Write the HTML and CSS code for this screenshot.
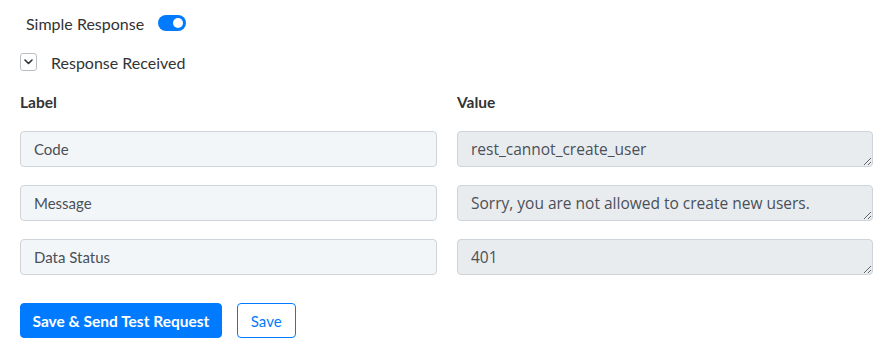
FILE: index.html
```html
<!DOCTYPE html>
<html lang="en">
<head>
    <meta charset="UTF-8">
    <title>Response</title>
    <link rel="stylesheet" href="styles.css">
</head>
<body>
    <div class="panel">
        <div class="simple">
            <span>Simple Response</span>
            <label class="switch">
                <input type="checkbox" checked>
                <span class="knob"></span>
            </label>
        </div>
        <div class="received">
            <span class="chev">
                <svg width="9" height="6" viewBox="0 0 9 6"><path d="M1 1 L4.5 4.5 L8 1" fill="none" stroke="#333" stroke-width="1.6" stroke-linecap="round" stroke-linejoin="round"/></svg>
            </span>
            <span>Response Received</span>
        </div>
        <div class="grid">
            <div class="head">Label</div>
            <div class="head">Value</div>
            <input class="field" type="text" value="Code">
            <textarea class="val" disabled>rest_cannot_create_user</textarea>
            <input class="field" type="text" value="Message">
            <textarea class="val" disabled>Sorry, you are not allowed to create new users.</textarea>
            <input class="field" type="text" value="Data Status">
            <textarea class="val" disabled>401</textarea>
        </div>
        <div class="actions">
            <button class="btn primary">Save &amp; Send Test Request</button>
            <button class="btn outline">Save</button>
        </div>
    </div>
</body>
</html>
```

FILE: styles.css
```css
* {
    box-sizing: border-box;
    margin: 0;
    padding: 0;
}
body {
    background: #fff;
    font-family: "Lato", "Noto Sans", sans-serif;
    color: #333;
}
.panel {
    padding: 12px 21px 0 20px;
}
.simple {
    display: flex;
    align-items: center;
    gap: 14px;
    padding-left: 6px;
    height: 22px;
    font-size: 16px;
    color: #333;
}
.switch {
    position: relative;
    display: inline-block;
    width: 28px;
    height: 16px;
}
.switch input {
    display: none;
}
.knob {
    position: absolute;
    inset: 0;
    background: #007bff;
    border-radius: 8px;
}
.knob::after {
    content: "";
    position: absolute;
    top: 3px;
    right: 3px;
    width: 10px;
    height: 10px;
    border-radius: 50%;
    background: #fff;
}
.received {
    display: flex;
    align-items: center;
    gap: 14px;
    margin-top: 19px;
    height: 18px;
    font-size: 16px;
}
.chev {
    display: flex;
    justify-content: center;
    align-items: center;
    width: 17px;
    height: 18px;
    border: 1px solid #b9bec4;
    border-radius: 3px;
}
.grid {
    display: grid;
    grid-template-columns: 417px 416px;
    column-gap: 20px;
    row-gap: 18px;
    margin-top: 20px;
}
.head {
    font-weight: 700;
    font-size: 15.5px;
    color: #333;
    height: 22px;
    line-height: 22px;
}
.field, .val {
    height: 36px;
    border: 1px solid #ced4da;
    border-radius: 4px;
    padding: 7px 13px;
    font-size: 15px;
    color: #495057;
}
.field {
    background: #f3f6f9;
    font-family: "Lato", sans-serif;
}
.val {
    background: #e9ecef;
    font-family: "Open Sans", "Noto Sans", sans-serif;
    font-size: 15.5px;
    line-height: 20px;
    resize: vertical;
    overflow: hidden;
}
.actions {
    display: flex;
    gap: 15px;
    margin-top: 28px;
}
.btn {
    height: 35px;
    border-radius: 4px;
    font-family: "Lato", sans-serif;
    font-size: 15.5px;
    padding: 0 13px;
}
.primary {
    background: #007bff;
    border: 1px solid #007bff;
    color: #fff;
    font-weight: 700;
    padding: 0 11.5px;
}
.outline {
    background: #fff;
    border: 1px solid #007bff;
    color: #007bff;
    font-size: 15px;
}
```
